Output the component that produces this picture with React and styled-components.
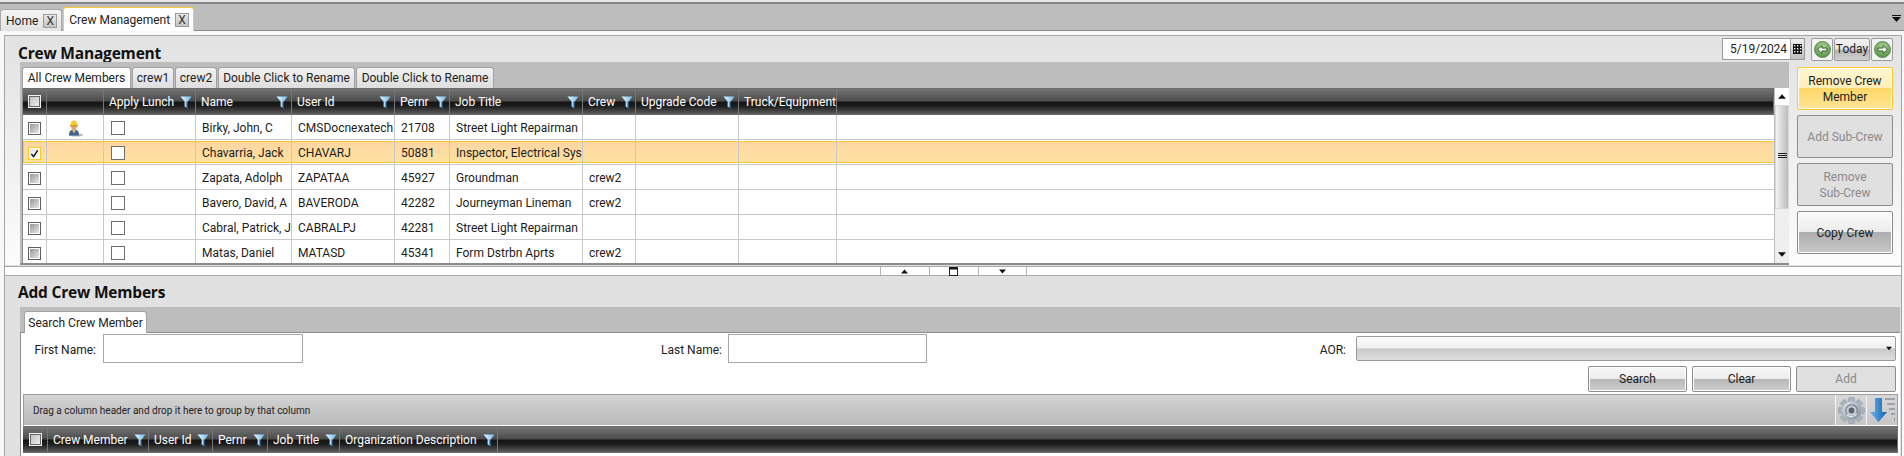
// Crew management screen: document tabs, crew grid with action buttons, and the add-member search below
import React from 'react'
import styled, {createGlobalStyle} from 'styled-components'

const GlobalStyle = createGlobalStyle`
  html, body {
    margin: 0;
    height: 456px;
    overflow: hidden;
    background: #fff;
    font-family: Roboto, "Open Sans", sans-serif;
    font-size: 12px;
    color: #111;
  }
  * { box-sizing: border-box; }
`

const crewColumns = '24px 57px 92px 96px 103px 55px 133px 53px 103px 98px 1fr'
const searchColumns = '25px 101px 64px 55px 72px 158px 1fr'
const headerGradient = 'linear-gradient(#737373 0%, #4c4c4c 48%, #141414 52%, #1c1c1c 68%, #5c5c5c 100%)'

const Page = styled.div`
  width: 1904px;
  height: 456px;
  overflow: hidden;
  display: flex;
  flex-direction: column;
`
const TopLine = styled.div`
  height: 4px;
  flex: none;
  background: #858585;
  border-top: 2px solid #e6e6e6;
`
const DocBar = styled.div`
  height: 27px;
  flex: none;
  display: flex;
  align-items: flex-end;
  gap: 1px;
  padding-left: 0;
  position: relative;
  background: #bdbdbd;
  border-bottom: 1px solid #8c8c8c;
`
const DocTab = styled.div`
  height: ${props => props.$active ? '24px' : '22px'};
  margin-bottom: -1px;
  display: flex;
  align-items: center;
  gap: 5px;
  padding: 0 4px 0 5px;
  white-space: nowrap;
  color: #222;
  border-radius: 3px 3px 0 0;
  background: ${props => props.$active ? '#fff' : 'linear-gradient(#f4f4f4, #e2e2e2)'};
  border: 1px solid ${props => props.$active ? '#ffc929' : '#a8a8a8'};
  border-bottom: none;
`
const CloseBox = styled.span`
  width: 14px;
  height: 14px;
  display: flex;
  align-items: center;
  justify-content: center;
  font-size: 12px;
  color: #333;
  background: linear-gradient(#e8e8e8, #c4c4c4);
  border: 1px solid #9a9a9a;
`
const BarArrow = styled.svg`
  position: absolute;
  right: 3px;
  top: 11px;
`
const Body = styled.div`
  flex: 1;
  min-height: 0;
  padding: 4px 2px 0 4px;
  background: #f8f8f8;
`
const Panel = styled.div`
  height: 100%;
  display: flex;
  flex-direction: column;
  border: 1px solid #a4a4a4;
  border-bottom: none;
  background: #e1e1e1;
`
const UpperSection = styled.div`
  height: 229px;
  flex: none;
  display: flex;
  flex-direction: column;
  background: linear-gradient(#e2e2e2, #fcfcfc);
`
const TitleRow = styled.div`
  height: 26px;
  flex: none;
  display: flex;
  align-items: center;
  justify-content: space-between;
  padding: 0 8px 0 13px;
`
const Title = styled.h2`
  margin: ${props => props.$drop ? '7px' : '1px'} 0 0;
  font-family: "Open Sans", sans-serif;
  font-size: 15.5px;
  font-weight: 700;
  color: #111;
  letter-spacing: -0.2px;
`
const DateTools = styled.div`
  display: flex;
  align-items: center;
  gap: 1px;
`
const DateBox = styled.div`
  width: 83px;
  height: 22px;
  margin-right: 5px;
  display: flex;
  background: #fff;
  border: 1px solid #9a9a9a;
`
const DateText = styled.span`
  flex: 1;
  padding-left: 7px;
  line-height: 20px;
  color: #222;
`
const CalendarButton = styled.span`
  width: 14px;
  display: flex;
  align-items: center;
  justify-content: center;
  background: linear-gradient(#f0f0f0, #bdbdbd);
  border-left: 1px solid #aaa;
`
const RoundButton = styled.button`
  width: 22px;
  height: 23px;
  padding: 0;
  display: flex;
  align-items: center;
  justify-content: center;
  background: #f4f4f4;
  border: 1px solid #9a9a9a;
  border-radius: 2px;
`
const TodayButton = styled.button`
  width: 36px;
  height: 23px;
  padding: 0;
  font: inherit;
  color: #222;
  background: linear-gradient(#f2f2f2 0%, #e6e6e6 48%, #b4b4b4 52%, #cfcfcf 100%);
  border: 1px solid #9a9a9a;
  border-radius: 2px;
`
const CrewRow = styled.div`
  flex: 1;
  min-height: 0;
  display: flex;
`
const CrewStrip = styled.div`
  width: 1769px;
  margin-left: 15px;
  height: 203px;
  display: flex;
  flex-direction: column;
  padding: 5px 0 0 2px;
  background: #bdbdbd;
  border-bottom: 2px solid #8c8c8c;
`
const SubTabs = styled.div`
  height: 21px;
  flex: none;
  display: flex;
  gap: 1px;
`
const SubTab = styled.div`
  display: flex;
  align-items: center;
  justify-content: center;
  width: ${props => props.$width}px;
  white-space: nowrap;
  color: #222;
  border-radius: 3px 3px 0 0;
  background: ${props => props.$active ? '#fff' : 'linear-gradient(#f2f2f2, #dedede)'};
  border: 1px solid #a2a2a2;
  border-bottom: none;
`
const GridWrap = styled.div`
  flex: 1;
  min-height: 0;
  display: flex;
  border-left: 1px solid #8c8c8c;
  background: #fff;
`
const GridBody = styled.div`
  flex: 1;
  min-width: 0;
  overflow: hidden;
`
const HeaderRow = styled.div`
  height: 27px;
  display: grid;
  grid-template-columns: ${props => props.$columns};
  background: ${headerGradient};
  border: 1px solid #6c6c6c;
  border-left: none;
`
const HeaderCell = styled.div`
  display: flex;
  align-items: center;
  justify-content: ${props => props.$tight ? 'flex-start' : 'space-between'};
  gap: 6px;
  padding: 1px 3px 0 5px;
  min-width: 0;
  white-space: nowrap;
  color: #fff;
  border-right: 1px solid #767676;

  &:last-child { border-right: none; }
`
const HeaderCheckCell = styled(HeaderCell)`
  justify-content: center;
  padding: 0;
`
const DataRow = styled.div`
  height: 25px;
  display: grid;
  grid-template-columns: ${crewColumns};
  border-bottom: 1px solid #c8c8c8;
  background: ${props => props.$selected ? 'linear-gradient(#ffd5a3, #fde3a0)' : '#fff'};
  box-shadow: ${props => props.$selected
    ? 'inset 0 1px 0 #fff, inset 0 2px 0 #ffc929, inset 0 -1px 0 #fff, inset 0 -2px 0 #ffc929, inset 1px 0 0 #ffc929'
    : 'none'};
`
const DataCell = styled.div`
  display: flex;
  align-items: center;
  justify-content: ${props => props.$center ? 'center' : 'flex-start'};
  padding: 2px 0 0 ${props => props.$center ? '0' : '6px'};
  min-width: 0;
  overflow: hidden;
  white-space: nowrap;
  color: #1c1c1c;
  border-right: 1px solid #c8c8c8;

  &:last-child { border-right: none; }
`
const RowCheck = styled.span`
  width: 13px;
  height: 13px;
  display: flex;
  align-items: center;
  justify-content: center;
  background: ${props => props.$selected ? 'linear-gradient(135deg, #e4e4e4, #fff)' : 'linear-gradient(135deg, #8f8f8f, #f0f0f0)'};
  border: 1px solid ${props => props.$selected ? '#ffc929' : '#5f5f5f'};
  box-shadow: inset 0 0 0 1px #fff;
`
const HeaderCheck = styled(RowCheck)`
  border-color: #f2f2f2;
  box-shadow: inset 0 0 0 1px #666;
  background: linear-gradient(135deg, #bbb, #f4f4f4);
`
const LunchBox = styled.span`
  width: 14px;
  height: 14px;
  margin-left: 1px;
  background: #fff;
  border: 1px solid #6e6e6e;
`
const ScrollBar = styled.div`
  width: 15px;
  flex: none;
  display: flex;
  flex-direction: column;
  align-items: stretch;
  background: #efefef;
  border-left: 1px solid #bbb;
`
const ScrollButton = styled.div`
  height: 17px;
  flex: none;
  display: flex;
  align-items: center;
  justify-content: center;
  background: ${props => props.$plain ? 'transparent' : '#fff'};
`
const ScrollThumb = styled.div`
  height: 104px;
  flex: none;
  display: flex;
  flex-direction: column;
  align-items: center;
  padding-top: 47px;
  background: linear-gradient(90deg, #f2f2f2, #bcbcbc);
  border: 1px solid #d8d8d8;
`
const ScrollSpacer = styled.div`
  flex: 1;
`
const GripLine = styled.span`
  width: 9px;
  height: 1px;
  margin-bottom: 1px;
  background: #222;
`
const SideColumn = styled.div`
  width: 112px;
  flex: none;
  display: flex;
  flex-direction: column;
  gap: 5px;
  padding: 5px 8px 0;
`
const ActionButton = styled.button`
  height: 43px;
  padding: 0 4px;
  font: inherit;
  line-height: 16px;
  border-radius: 2px;
  color: ${props => props.$disabled ? '#8a8a8a' : '#1c1c1c'};
  border: 1px solid ${props => props.$tone === 'gold' ? '#ffc929' : '#8c8c8c'};
  background: ${props => props.$tone === 'gold'
    ? 'linear-gradient(#fff6d2 0%, #ffeeb8 48%, #ffd768 50%, #ffe596 100%)'
    : props.$disabled
      ? '#e0e0e0'
      : 'linear-gradient(#fbfbfb 0%, #ececec 48%, #adadad 50%, #c9c9c9 100%)'};
  box-shadow: ${props => props.$disabled ? 'none' : 'inset 0 0 0 1px #fff'};
`
const Splitter = styled.div`
  height: 10px;
  flex: none;
  margin: 1px 0 0;
  display: flex;
  justify-content: center;
  background: #fff;
  border-top: 1px solid #a8a8a8;
  border-bottom: 1px solid #a8a8a8;
`
const SplitButton = styled.div`
  width: 49px;
  display: flex;
  align-items: center;
  justify-content: center;
  border-left: 1px solid #b4b4b4;

  &:last-child { border-right: 1px solid #b4b4b4; }
`
const LowerSection = styled.div`
  flex: 1;
  min-height: 0;
  display: flex;
  flex-direction: column;
`
const LowerTitle = styled.div`
  height: 31px;
  flex: none;
  display: flex;
  align-items: center;
  padding-left: 13px;
`
const SearchStrip = styled.div`
  flex: 1;
  min-height: 0;
  margin: 0 1px 0 15px;
  display: flex;
  flex-direction: column;
  background: #bdbdbd;
`
const SearchTabs = styled.div`
  height: 25px;
  flex: none;
  display: flex;
  align-items: flex-end;
  padding-left: 4px;
`
const SearchTab = styled(SubTab)`
  height: 22px;
  margin-bottom: -1px;
  position: relative;
`
const SearchBody = styled.div`
  flex: 1;
  min-height: 0;
  background: #fff;
  border-top: 1px solid #8c8c8c;
  border-left: 1px solid #8c8c8c;
`
const FormGrid = styled.div`
  height: 61px;
  padding-top: 1px;
  display: grid;
  grid-template-columns: 82px 200px 425px 199px 429px 540px;
  grid-template-rows: 32px 28px;
`
const FieldLabel = styled.label`
  align-self: center;
  justify-self: end;
  padding-right: ${props => props.$gap}px;
  color: #222;
`
const TextInput = styled.input`
  height: 29px;
  padding: 0 4px;
  font: inherit;
  background: #fff;
  border: 1px solid #a8a8a8;
  border-radius: 0;
  outline: none;
`
const SelectBox = styled.div`
  height: 25px;
  margin-top: 2px;
  display: flex;
  align-items: center;
  justify-content: flex-end;
  padding-right: 3px;
  background: linear-gradient(#fcfcfc 0%, #efefef 48%, #c9c9c9 52%, #dedede 100%);
  border: 1px solid #9a9a9a;
  border-radius: 2px;
`
const FormButtons = styled.div`
  grid-column: 1 / -1;
  display: flex;
  justify-content: flex-end;
  align-items: flex-start;
  gap: 5px;
`
const FormButton = styled.button`
  width: ${props => props.$wide ? 100 : 99}px;
  height: 26px;
  padding: 0;
  font: inherit;
  border-radius: 2px;
  color: ${props => props.$disabled ? '#8a8a8a' : '#1c1c1c'};
  border: 1px solid #8c8c8c;
  background: ${props => props.$disabled
    ? '#e0e0e0'
    : 'linear-gradient(#f8f8f8 0%, #ececec 48%, #b8b8b8 52%, #cfcfcf 100%)'};
  box-shadow: ${props => props.$disabled ? 'none' : 'inset 0 0 0 1px #fff'};
`
const SearchGrid = styled.div`
  margin: 0 2px;
`
const GroupPanel = styled.div`
  height: 32px;
  display: flex;
  align-items: center;
  justify-content: space-between;
  padding-left: 9px;
  font-size: 10px;
  color: #222;
  background: linear-gradient(#d4d4d4, #b9b9b9);
  border: 1px solid #9a9a9a;
  border-bottom-color: #fff;
`
const GroupTools = styled.div`
  height: 100%;
  display: flex;
`
const GroupTool = styled.div`
  width: 31px;
  display: flex;
  align-items: center;
  justify-content: center;
  background: linear-gradient(#d8d8d8, #c6c6c6);
  border-left: 1px solid #f4f4f4;
`

function FilterIcon() {
  return (
    <svg width="12" height="13" viewBox="0 0 12 13" style={{flex: 'none'}}>
      <defs>
        <linearGradient id="funnelFill" x1="0" y1="0" x2="1" y2="0">
          <stop offset="0" stopColor="#eaf6ff"/>
          <stop offset="1" stopColor="#6cb9ee"/>
        </linearGradient>
      </defs>
      <path d="M0.5 0.5H11.5L7.8 5.5V12.5L4.6 10.5V5.5Z" fill="url(#funnelFill)"/>
      <path d="M6.6 5.5H7.8V12.5L6.6 11.8Z" fill="#12395c"/>
    </svg>
  )
}

function WorkerIcon() {
  return (
    <svg width="16" height="17" viewBox="0 0 16 17">
      <ellipse cx="9" cy="15" rx="7" ry="1.6" fill="#b9b9b9"/>
      <path d="M2 15.5C2 11 4 9.6 7 9.6S12 11 12 15.5Z" fill="#3f628f"/>
      <path d="M5 9.8L7 13.5L9 9.8Z" fill="#e8c55a"/>
      <circle cx="7" cy="6.8" r="2.9" fill="#d9a876"/>
      <path d="M3.4 5.8C3.4 2 5 0.4 7 0.4S10.6 2 10.6 5.8Z" fill="#f2cb2e"/>
      <rect x="2.8" y="5.2" width="8.4" height="1.2" fill="#c99a12"/>
    </svg>
  )
}

function CalendarIcon() {
  return (
    <svg width="9" height="10" viewBox="0 0 9 10">
      <rect width="9" height="10" fill="#111"/>
      {[1, 4, 7].map(x => [2, 5, 8].map(y => (
        <rect key={`${x}-${y}`} x={x} y={y - 1} width="1.4" height="1.4" fill="#fff"/>
      )))}
    </svg>
  )
}

function ArrowBall({flip}) {
  return (
    <svg width="17" height="17" viewBox="0 0 17 17">
      <defs>
        <radialGradient id="ballFill" cx="0.5" cy="0.35" r="0.7">
          <stop offset="0" stopColor="#b4d89a"/>
          <stop offset="1" stopColor="#4c8c3c"/>
        </radialGradient>
      </defs>
      <circle cx="8.5" cy="8.5" r="8" fill="url(#ballFill)" stroke="#5f8f55"/>
      <path
        d="M3.5 8.5L8 4.5V7H13V10H8V12.5Z"
        fill="#eef2ea"
        stroke="#38612f"
        transform={flip ? 'rotate(180 8.5 8.5)' : undefined}/>
    </svg>
  )
}

function Triangle({down, width = 9}) {
  return (
    <svg width={width} height="5" viewBox="0 0 9 5">
      <path d={down ? 'M0 0H9L4.5 5Z' : 'M0 5H9L4.5 0Z'} fill="#111"/>
    </svg>
  )
}

function GearIcon() {
  const teeth = [0, 45, 90, 135, 180, 225, 270, 315]
  return (
    <svg width="27" height="27" viewBox="0 0 26 26">
      <defs>
        <linearGradient id="gearFill" x1="0" y1="0" x2="1" y2="1">
          <stop offset="0" stopColor="#e2e7ec"/>
          <stop offset="1" stopColor="#7d8a96"/>
        </linearGradient>
      </defs>
      {teeth.map(angle => (
        <rect key={angle} x="10" y="0.5" width="6" height="7" rx="1" fill="#a9b3bd" stroke="#8c97a2" strokeWidth="0.5" transform={`rotate(${angle} 13 13)`}/>
      ))}
      <circle cx="13" cy="13" r="9" fill="url(#gearFill)"/>
      <circle cx="13" cy="13" r="5.5" fill="#c6ced6" stroke="#6f7b86"/>
      <circle cx="13" cy="13" r="2.8" fill="#59646f"/>
      <path d="M8.5 17A6 6 0 0 0 18 16" fill="none" stroke="#eef1f4" strokeWidth="1"/>
    </svg>
  )
}

function SortDownIcon() {
  return (
    <svg width="27" height="26" viewBox="0 0 27 26">
      <defs>
        <linearGradient id="arrowFill" x1="0" y1="0" x2="1" y2="0">
          <stop offset="0" stopColor="#6ab4ea"/>
          <stop offset="1" stopColor="#1160b4"/>
        </linearGradient>
      </defs>
      <path d="M6 1H13V15H18L9.5 25L1 15H6Z" fill="url(#arrowFill)"/>
      <g fill="#9aa3ab">
        <rect x="16" y="1" width="10" height="2"/>
        <rect x="18" y="6" width="8" height="2"/>
        <rect x="20" y="11" width="6" height="2"/>
        <rect x="22" y="16" width="4" height="2"/>
        <rect x="25" y="21" width="1" height="3"/>
      </g>
    </svg>
  )
}

const crewTabs = [
  {label: 'All Crew Members', width: 109, active: true},
  {label: 'crew1', width: 42},
  {label: 'crew2', width: 42},
  {label: 'Double Click to Rename', width: 137},
  {label: 'Double Click to Rename', width: 138}
]

const crewHeaders = [
  {label: 'Apply Lunch', filter: true},
  {label: 'Name', filter: true},
  {label: 'User Id', filter: true},
  {label: 'Pernr', filter: true},
  {label: 'Job Title', filter: true},
  {label: 'Crew', filter: true},
  {label: 'Upgrade Code', filter: true},
  {label: 'Truck/Equipment'}
]

const members = [
  {name: 'Birky, John, C', userId: 'CMSDocnexatech', pernr: '21708', job: 'Street Light Repairman', crew: '', foreman: true},
  {name: 'Chavarria, Jack', userId: 'CHAVARJ', pernr: '50881', job: 'Inspector, Electrical Sys', crew: '', selected: true},
  {name: 'Zapata, Adolph', userId: 'ZAPATAA', pernr: '45927', job: 'Groundman', crew: 'crew2'},
  {name: 'Bavero, David, A', userId: 'BAVERODA', pernr: '42282', job: 'Journeyman Lineman', crew: 'crew2'},
  {name: 'Cabral, Patrick, J', userId: 'CABRALPJ', pernr: '42281', job: 'Street Light Repairman', crew: ''},
  {name: 'Matas, Daniel', userId: 'MATASD', pernr: '45341', job: 'Form Dstrbn Aprts', crew: 'crew2'}
]

const searchHeaders = ['Crew Member', 'User Id', 'Pernr', 'Job Title', 'Organization Description']

function CrewGrid() {
  return (
    <GridBody>
      <HeaderRow $columns={crewColumns}>
        <HeaderCheckCell><HeaderCheck/></HeaderCheckCell>
        <HeaderCell/>
        {crewHeaders.map(col => (
          <HeaderCell key={col.label}>
            {col.label}
            {col.filter && <FilterIcon/>}
          </HeaderCell>
        ))}
        <HeaderCell/>
      </HeaderRow>
      {members.map(member => (
        <DataRow key={member.userId} $selected={member.selected}>
          <DataCell $center>
            <RowCheck $selected={member.selected}>
              {member.selected && (
                <svg width="9" height="9" viewBox="0 0 10 10">
                  <path d="M1.5 5.5L4 8.5L8.5 1.5" fill="none" stroke="#111" strokeWidth="1.6"/>
                </svg>
              )}
            </RowCheck>
          </DataCell>
          <DataCell $center>{member.foreman && <WorkerIcon/>}</DataCell>
          <DataCell><LunchBox/></DataCell>
          <DataCell>{member.name}</DataCell>
          <DataCell>{member.userId}</DataCell>
          <DataCell>{member.pernr}</DataCell>
          <DataCell>{member.job}</DataCell>
          <DataCell>{member.crew}</DataCell>
          <DataCell/>
          <DataCell/>
          <DataCell/>
        </DataRow>
      ))}
    </GridBody>
  )
}

export default function App() {
  return (
    <Page>
      <GlobalStyle/>
      <TopLine/>
      <DocBar>
        <DocTab>Home <CloseBox>X</CloseBox></DocTab>
        <DocTab $active>Crew Management <CloseBox>X</CloseBox></DocTab>
        <BarArrow width="9" height="7" viewBox="0 0 9 7">
          <rect width="9" height="1" fill="#111"/>
          <path d="M0 2H9L4.5 7Z" fill="#111"/>
        </BarArrow>
      </DocBar>
      <Body>
        <Panel>
          <UpperSection>
            <TitleRow>
              <Title $drop>Crew Management</Title>
              <DateTools>
                <DateBox>
                  <DateText>5/19/2024</DateText>
                  <CalendarButton><CalendarIcon/></CalendarButton>
                </DateBox>
                <RoundButton><ArrowBall/></RoundButton>
                <TodayButton>Today</TodayButton>
                <RoundButton><ArrowBall flip/></RoundButton>
              </DateTools>
            </TitleRow>
            <CrewRow>
              <CrewStrip>
                <SubTabs>
                  {crewTabs.map((tab, i) => (
                    <SubTab key={i} $width={tab.width} $active={tab.active}>{tab.label}</SubTab>
                  ))}
                </SubTabs>
                <GridWrap>
                  <CrewGrid/>
                  <ScrollBar>
                    <ScrollButton><Triangle width={8}/></ScrollButton>
                    <ScrollThumb><GripLine/><GripLine/><GripLine/></ScrollThumb>
                    <ScrollSpacer/>
                    <ScrollButton $plain><Triangle down width={8}/></ScrollButton>
                  </ScrollBar>
                </GridWrap>
              </CrewStrip>
              <SideColumn>
                <ActionButton $tone="gold">Remove Crew<br/>Member</ActionButton>
                <ActionButton $disabled>Add Sub-Crew</ActionButton>
                <ActionButton $disabled>Remove<br/>Sub-Crew</ActionButton>
                <ActionButton>Copy Crew</ActionButton>
              </SideColumn>
            </CrewRow>
          </UpperSection>
          <Splitter>
            <SplitButton><Triangle width={7}/></SplitButton>
            <SplitButton>
              <svg width="9" height="9" viewBox="0 0 9 9">
                <rect x="0.5" y="0.5" width="8" height="8" fill="#fff" stroke="#222"/>
                <rect x="0.5" y="0.5" width="8" height="2" fill="#111"/>
              </svg>
            </SplitButton>
            <SplitButton><Triangle down width={7}/></SplitButton>
          </Splitter>
          <LowerSection>
            <LowerTitle><Title>Add Crew Members</Title></LowerTitle>
            <SearchStrip>
              <SearchTabs>
                <SearchTab $width={123} $active>Search Crew Member</SearchTab>
              </SearchTabs>
              <SearchBody>
                <FormGrid>
                  <FieldLabel $gap={7}>First Name:</FieldLabel>
                  <TextInput/>
                  <FieldLabel $gap={6}>Last Name:</FieldLabel>
                  <TextInput/>
                  <FieldLabel $gap={10}>AOR:</FieldLabel>
                  <SelectBox><Triangle down width={6}/></SelectBox>
                  <FormButtons>
                    <FormButton>Search</FormButton>
                    <FormButton>Clear</FormButton>
                    <FormButton $wide $disabled>Add</FormButton>
                  </FormButtons>
                </FormGrid>
                <SearchGrid>
                  <GroupPanel>
                    Drag a column header and drop it here to group by that column
                    <GroupTools>
                      <GroupTool><GearIcon/></GroupTool>
                      <GroupTool><SortDownIcon/></GroupTool>
                    </GroupTools>
                  </GroupPanel>
                  <HeaderRow $columns={searchColumns}>
                    <HeaderCheckCell><HeaderCheck/></HeaderCheckCell>
                    {searchHeaders.map(label => (
                      <HeaderCell key={label} $tight>{label}<FilterIcon/></HeaderCell>
                    ))}
                    <HeaderCell/>
                  </HeaderRow>
                </SearchGrid>
              </SearchBody>
            </SearchStrip>
          </LowerSection>
        </Panel>
      </Body>
    </Page>
  )
}
